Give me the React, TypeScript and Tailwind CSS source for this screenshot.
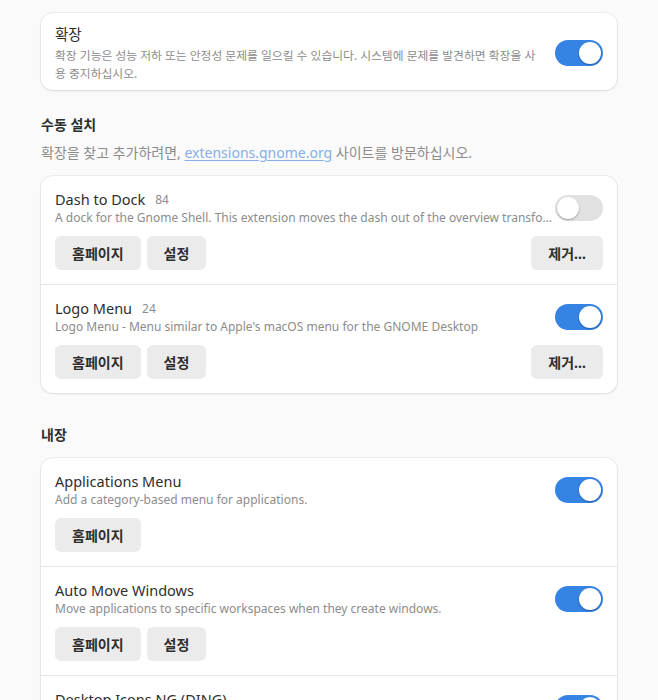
import React, { useState } from "react";

interface Ext {
  id: number;
  name: string;
  count?: string;
  desc: string;
  enabled: boolean;
  settings?: boolean;
  remove?: boolean;
}

const userExts: Ext[] = [
  {
    id: 0,
    name: "Dash to Dock",
    count: "84",
    desc: "A dock for the Gnome Shell. This extension moves the dash out of the overview transforming it in a dock for an easier launching of applications and a faster switching between windows and desktops.",
    enabled: false,
    settings: true,
    remove: true,
  },
  {
    id: 1,
    name: "Logo Menu",
    count: "24",
    desc: "Logo Menu - Menu similar to Apple's macOS menu for the GNOME Desktop",
    enabled: true,
    settings: true,
    remove: true,
  },
];

const systemExts: Ext[] = [
  {
    id: 2,
    name: "Applications Menu",
    desc: "Add a category-based menu for applications.",
    enabled: true,
  },
  {
    id: 3,
    name: "Auto Move Windows",
    desc: "Move applications to specific workspaces when they create windows.",
    enabled: true,
    settings: true,
  },
  {
    id: 4,
    name: "Desktop Icons NG (DING)",
    desc: "Desktop icons support for the GNOME Shell.",
    enabled: true,
    settings: true,
  },
];

const Toggle: React.FC<{ on: boolean; onClick: () => void }> = ({ on, onClick }) => (
  <button
    onClick={onClick}
    className={`relative shrink-0 w-[48px] h-[26px] rounded-full ${on ? "bg-[#3584e4]" : "bg-[#e1e1e1]"}`}
  >
    <span
      className={`absolute top-[2px] w-[22px] h-[22px] rounded-full bg-white shadow-[0_1px_2px_rgba(0,0,0,0.3)] ${
        on ? "left-[24px]" : "left-[2px]"
      }`}
    />
  </button>
);

const Btn: React.FC<{ label: string }> = ({ label }) => (
  <button className="h-[34px] px-[17px] rounded-[6px] bg-[#ebebeb] text-[14px] font-bold text-[#2e2e2e]">
    {label}
  </button>
);

const Row: React.FC<{ ext: Ext; last: boolean }> = ({ ext, last }) => {
  const [on, setOn] = useState(ext.enabled);
  return (
    <div className={`p-[14px] ${last ? "" : "border-b border-[#e6e6e6]"}`}>
      <div className="flex items-center gap-[2px]">
        <div className="flex-1 min-w-0">
          <div className="flex items-center h-[20px]">
            <span className="text-[14.5px] text-[#2e2e2e]">{ext.name}</span>
            {ext.count && <span className="ml-[10px] text-[12px] text-[#8c8c8c]">{ext.count}</span>}
          </div>
          <p className="text-[12px] leading-[16px] text-[#8c8c8c] truncate">{ext.desc}</p>
        </div>
        <Toggle on={on} onClick={() => setOn(!on)} />
      </div>
      <div className="flex items-center gap-[6px] mt-[10px]">
        <Btn label="홈페이지" />
        {ext.settings && <Btn label="설정" />}
        {ext.remove && (
          <div className="ml-auto">
            <Btn label="제거…" />
          </div>
        )}
      </div>
    </div>
  );
};

const Card: React.FC<{ children: React.ReactNode }> = ({ children }) => (
  <div className="bg-white rounded-[12px] shadow-[0_0_0_1px_rgba(0,0,0,0.05),0_1px_3px_rgba(0,0,0,0.08)] overflow-hidden">
    {children}
  </div>
);

export default function App() {
  const [master, setMaster] = useState(true);
  return (
    <div
      className="min-h-[700px] h-[700px] overflow-hidden bg-[#fafafa] text-[#2e2e2e]"
      style={{ fontFamily: '"Noto Sans", "Noto Sans CJK KR", sans-serif' }}
    >
      <div className="w-[576px] mx-auto pt-[13px]">
        <Card>
          <div className="flex items-center gap-[14px] px-[14px] pt-[10px] pb-[8px]">
            <div className="flex-1">
              <div className="text-[14.5px] leading-[22px]">확장</div>
              <p className="mt-[1px] text-[11.8px] leading-[18px] text-[#8c8c8c] break-all">
                확장 기능은 성능 저하 또는 안정성 문제를 일으킬 수 있습니다. 시스템에 문제를 발견하면 확장을 사용 중지하십시오.
              </p>
            </div>
            <Toggle on={master} onClick={() => setMaster(!master)} />
          </div>
        </Card>

        <h2 className="mt-[25px] text-[14px] leading-[20px] font-bold">수동 설치</h2>
        <p className="mt-[8px] text-[14px] leading-[20px] text-[#8c8c8c]">
          확장을 찾고 추가하려면,{" "}
          <a className="text-[#84afe8] underline underline-offset-2">extensions.gnome.org</a> 사이트를 방문하십시오.
        </p>

        <div className="mt-[13px]">
          <Card>
            {userExts.map((e, i) => (
              <Row key={e.id} ext={e} last={i === userExts.length - 1} />
            ))}
          </Card>
        </div>

        <h2 className="mt-[32px] text-[14px] leading-[20px] font-bold">내장</h2>

        <div className="mt-[13px]">
          <Card>
            {systemExts.map((e, i) => (
              <Row key={e.id} ext={e} last={i === systemExts.length - 1} />
            ))}
          </Card>
        </div>
      </div>
    </div>
  );
}
